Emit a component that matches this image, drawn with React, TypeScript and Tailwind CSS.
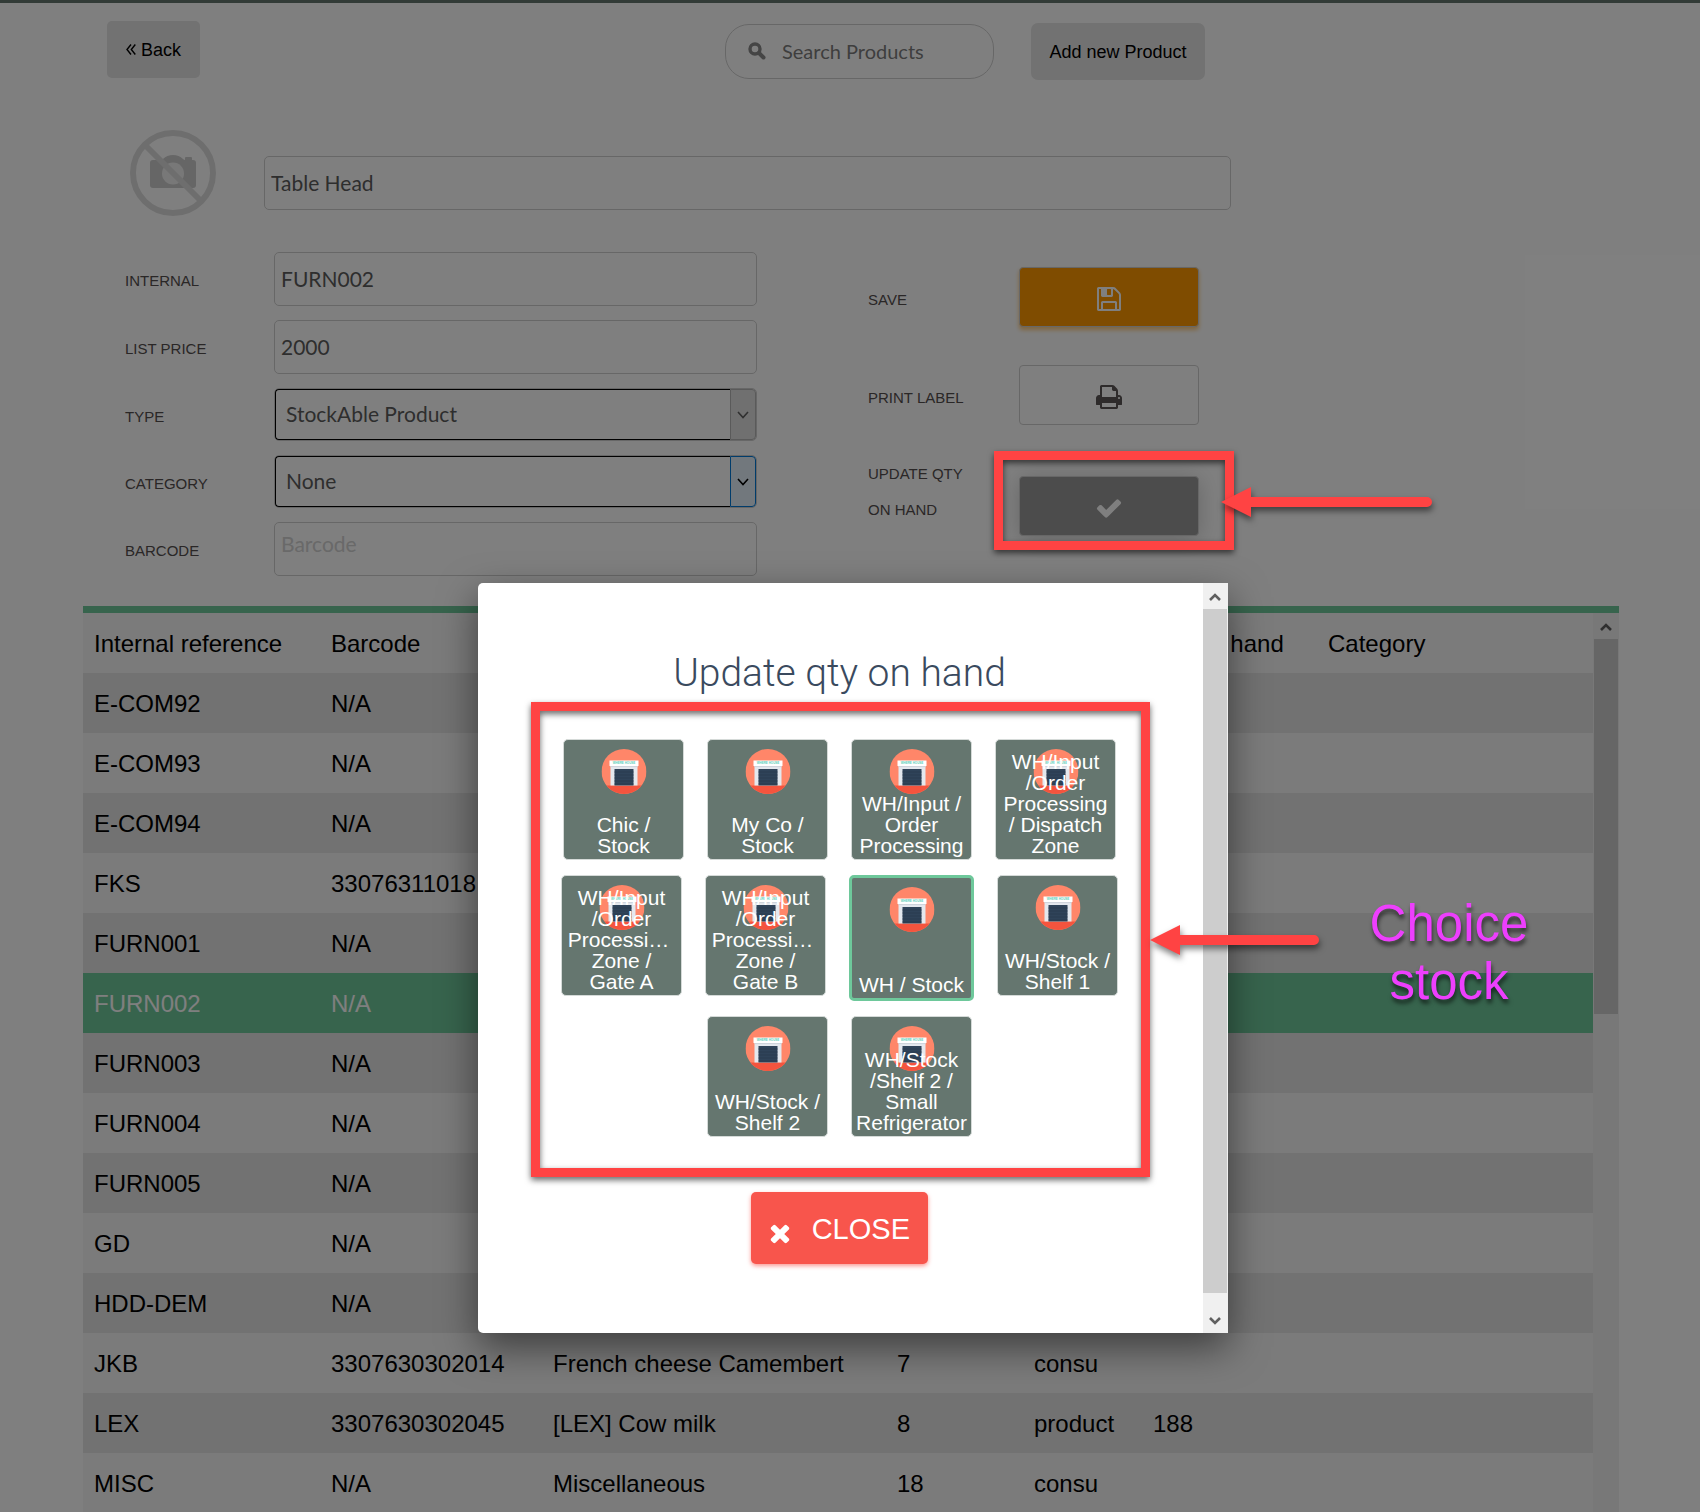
import type { ReactNode } from "react";

const GLYPHS = {
  save: "M512 1536h768v-384h-768v384zm896 0h128v-896q0-14-10-38.5t-20-34.5l-281-281q-10-10-34-20t-39-10v416q0 40-28 68t-68 28h-576q-40 0-68-28t-28-68v-416h-128v1280h128v-416q0-40 28-68t68-28h832q40 0 68 28t28 68v416zm-384-928v-320q0-13-9.5-22.5t-22.5-9.5h-192q-13 0-22.5 9.5t-9.5 22.5v320q0 13 9.5 22.5t22.5 9.5h192q13 0 22.5-9.5t9.5-22.5zm640 32v928q0 40-28 68t-68 28h-1344q-40 0-68-28t-28-68v-1344q0-40 28-68t68-28h928q40 0 88 20t76 48l280 280q28 28 48 76t20 88z",
  print:
    "M448 1536h896v-256h-896v256zm0-640h896v-384h-160q-40 0-68-28t-28-68v-160h-640v640zm1152 64q0-26-19-45t-45-19-45 19-19 45 19 45 45 19 45-19 19-45zm128 0v416q0 13-9.5 22.5t-22.5 9.5h-224v160q0 40-28 68t-68 28h-960q-40 0-68-28t-28-68v-160h-224q-13 0-22.5-9.5t-9.5-22.5v-416q0-79 56.5-135.5t135.5-56.5h64v-544q0-40 28-68t68-28h672q40 0 88 20t76 48l152 152q28 28 48 76t20 88v256h64q79 0 135.5 56.5t56.5 135.5z",
  check:
    "M1671 566q0 40-28 68l-724 724-136 136q-28 28-68 28t-68-28l-136-136-362-362q-28-28-28-68t28-68l136-136q28-28 68-28t68 28l294 295 656-657q28-28 68-28t68 28l136 136q28 28 28 68z",
  times:
    "M1490 1322q0 40-28 68l-136 136q-28 28-68 28t-68-28l-294-294-294 294q-28 28-68 28t-68-28l-136-136q-28-28-28-68t28-68l294-294-294-294q-28-28-28-68t28-68l136-136q28-28 68-28t68 28l294 294 294-294q28-28 68-28t68 28l136 136q28 28 28 68t-28 68l-294 294 294 294q28 28 28 68z",
};

function Glyph({ name, className }: { name: keyof typeof GLYPHS; className: string }) {
  return (
    <svg viewBox="0 0 1792 1792" className={className} fill="currentColor" aria-hidden="true">
      <path d={GLYPHS[name]} />
    </svg>
  );
}

function ScrollArrow({ down }: { down?: boolean }) {
  return (
    <svg viewBox="0 0 12 10" className="h-[10px] w-3" fill="none" stroke="#5f5f5f" strokeWidth="2.6" aria-hidden="true">
      <path d={down ? "M1 2 L6 7 L11 2" : "M1 8 L6 3 L11 8"} />
    </svg>
  );
}

function StoreIcon() {
  return (
    <svg viewBox="0 0 45 45" className="absolute top-[9px] left-1/2 size-[45px] -translate-x-1/2" aria-hidden="true">
      <defs>
        <clipPath id="disc">
          <circle cx="22.5" cy="22.5" r="22.5" />
        </clipPath>
      </defs>
      <g clipPath="url(#disc)">
        <rect width="45" height="45" fill="#ff8669" />
        <rect y="36.5" width="45" height="9" fill="#f4543e" />
        <rect x="9" y="16" width="27" height="20.5" fill="#e4e8ee" />
        <rect x="9" y="16.5" width="27" height="1.6" fill="#cfd4dc" />
        <rect x="13" y="20" width="19" height="16.5" fill="#2f4359" />
        <path d="M13 23h19M13 26h19M13 29h19M13 32h19M13 35h19" stroke="#283a4e" strokeWidth="0.8" />
        <rect x="8" y="11.5" width="29" height="5.5" fill="#fff" />
        <text x="22.5" y="15.4" textAnchor="middle" fontSize="3" fontWeight="700" fontFamily="Liberation Sans, sans-serif" fill="#5fd0bb">
          WHERE HOUSE
        </text>
      </g>
    </svg>
  );
}

const field =
  "h-[54px] w-full rounded-[5px] border border-[#cfcfcf] bg-white px-[6px] pb-[2px] font-[Lato,sans-serif] text-[21px] text-[#5c5c5c] placeholder:text-[#d2d2d2]";

function Label({ htmlFor, children }: { htmlFor: string; children: ReactNode }) {
  return (
    <label htmlFor={htmlFor} className="w-[149px] shrink-0 pt-[5px] text-[15px] text-[#544e4e]">
      {children}
    </label>
  );
}

function SelectBox({ id, value, active }: { id: string; value: string; active?: boolean }) {
  return (
    <div className="flex h-[53px] w-full rounded-[5px] border border-[#cfcfcf]">
      <select
        id={id}
        className="min-w-0 flex-1 appearance-none rounded-l-[4px] border border-r-0 border-black bg-white px-[10px] pb-[2px] font-[Lato,sans-serif] text-[21px] text-[#5c5c5c]"
      >
        <option>{value}</option>
      </select>
      <span
        className={
          active
            ? "flex w-[26px] items-center justify-center rounded-r-[4px] border border-[#0078d7] bg-[#e5f1fb] text-black"
            : "flex w-[26px] items-center justify-center rounded-r-[4px] border border-[#b4b4b4] bg-[#e1e1e1] text-[#606060]"
        }
      >
        <svg viewBox="0 0 12 8" className="h-2 w-3" fill="none" stroke="currentColor" strokeWidth="1.6" aria-hidden="true">
          <path d="M1 1 L6 6.5 L11 1" />
        </svg>
      </span>
    </div>
  );
}

const rows: string[][] = [
  ["E-COM92", "N/A"],
  ["E-COM93", "N/A"],
  ["E-COM94", "N/A"],
  ["FKS", "33076311018"],
  ["FURN001", "N/A"],
  ["FURN002", "N/A"],
  ["FURN003", "N/A"],
  ["FURN004", "N/A"],
  ["FURN005", "N/A"],
  ["GD", "N/A"],
  ["HDD-DEM", "N/A"],
  ["JKB", "3307630302014", "French cheese Camembert", "7", "consu"],
  ["LEX", "3307630302045", "[LEX] Cow milk", "8", "product", "188"],
  ["MISC", "N/A", "Miscellaneous", "18", "consu"],
];

const columns = ["Internal reference", "Barcode", "Name", "Price", "Type", "Qty on hand", "Category"];

function rowClass(i: number) {
  if (rows[i][0] === "FURN002") return "h-[60px] bg-[#6ec89b] text-white";
  return i % 2 === 0 ? "h-[60px] bg-[#e4e4e4]" : "h-[60px] bg-[#f6f6f6]";
}

const locations: string[][][] = [
  [
    ["Chic /", "Stock"],
    ["My Co /", "Stock"],
    ["WH/Input /", "Order", "Processing"],
    ["WH/Input", "/Order", "Processing", "/ Dispatch", "Zone"],
  ],
  [
    ["WH/Input", "/Order", "Processi…\u00a0", "Zone /", "Gate A"],
    ["WH/Input", "/Order", "Processi…\u00a0", "Zone /", "Gate B"],
    ["WH / Stock"],
    ["WH/Stock /", "Shelf 1"],
  ],
  [
    ["WH/Stock /", "Shelf 2"],
    ["WH/Stock", "/Shelf 2 /", "Small", "Refrigerator"],
  ],
];

function LocationTile({ lines }: { lines: string[] }) {
  const selected = lines[0] === "WH / Stock";
  return (
    <button
      type="button"
      className={
        selected
          ? "relative flex h-[126px] w-[125px] flex-col justify-end rounded-[5px] border-[3px] border-[#6ec89b] bg-[#65766f] pb-[3px] text-[21px] leading-[21px] text-white"
          : "relative flex size-[121px] flex-col justify-end rounded-[5px] border border-[#d5dad8] bg-[#65766f] pb-[3px] text-[21px] leading-[21px] text-white"
      }
    >
      <StoreIcon />
      {lines.map((line, i) => (
        <span key={i} className="relative w-full text-center whitespace-nowrap">
          {line}
        </span>
      ))}
    </button>
  );
}

function Arrow({ className, length }: { className: string; length: number }) {
  return (
    <svg
      width={length}
      height="32"
      className={className}
      fill="#ff4343"
      aria-hidden="true"
    >
      <path d={`M0 16 L30 1 V11 H${length - 5} A5 5 0 0 1 ${length - 5} 21 H30 V31 Z`} />
    </svg>
  );
}

export default function App() {
  return (
    <div className="relative flex h-screen flex-col overflow-hidden bg-white font-['Liberation_Sans',Arial,sans-serif] text-black">
      <div className="h-[3px] shrink-0 bg-[#65766f]" />

      <header className="mt-[18px] mr-[495px] ml-[107px] flex shrink-0 items-start justify-between">
        <button
          type="button"
          className="flex h-[57px] w-[93px] items-center justify-center gap-[5px] rounded-[5px] bg-[#e4e4e4] text-lg"
        >
          <svg viewBox="0 0 10 11" className="h-[11px] w-[10px]" fill="none" stroke="currentColor" strokeWidth="1.4" aria-hidden="true">
            <path d="M5 0.5 L1 5.5 L5 10.5 M9.3 0.5 L5.3 5.5 L9.3 10.5" />
          </svg>
          Back
        </button>
        <div className="mt-[2px] flex items-center gap-[37px]">
          <label className="flex h-[55px] w-[269px] items-center gap-4 rounded-[24px] border border-[#cfcfcf] pb-[2px] pl-[22px]">
            <svg viewBox="0 0 18 18" className="size-[18px] shrink-0" fill="none" stroke="#8a8a8a" aria-hidden="true">
              <circle cx="7" cy="7" r="5" strokeWidth="3.4" />
              <path d="M11 11 L15.5 15.5" strokeWidth="4" strokeLinecap="round" />
            </svg>
            <input
              type="text"
              aria-label="Search Products"
              placeholder="Search Products"
              className="w-full min-w-0 bg-transparent font-[Lato,sans-serif] text-xl outline-none placeholder:text-[#7d7d7d]"
            />
          </label>
          <button type="button" className="h-[57px] w-[174px] rounded-[7px] bg-[#e4e4e4] text-lg">
            Add new Product
          </button>
        </div>
      </header>

      <section className="mt-[50px] mr-[469px] ml-[130px] flex shrink-0 items-end">
        <svg viewBox="0 0 86 86" className="mr-[48px] size-[86px] shrink-0" fill="none" aria-hidden="true">
          <path
            d="M23 30 h7 q2 0 3-1 q4-4 10-4 q6 0 10 4 q1 1 2 1 v-2 q0-1 1-1 h5 q1 0 1 1 v2 h1 q3 0 3 3 v22 q0 3-3 3 h-40 q-3 0-3-3 v-22 q0-3 3-3 Z"
            fill="#cccccc"
          />
          <circle cx="43" cy="43.5" r="11" fill="#f1f1f1" />
          <path d="M15 15 L71 71" stroke="#dddddd" strokeWidth="6" />
          <circle cx="43" cy="43" r="40" stroke="#dddddd" strokeWidth="6" />
        </svg>
        <div className="flex-1 pb-[6px]">
          <input aria-label="Product name" className={field} defaultValue="Table Head" />
        </div>
      </section>

      <section className="mt-9 mr-[501px] ml-[125px] flex shrink-0 items-start justify-between">
        <div className="flex w-[632px] flex-col gap-[14px]">
          <div className="flex items-center">
            <Label htmlFor="internal">INTERNAL</Label>
            <input id="internal" className={field} defaultValue="FURN002" />
          </div>
          <div className="flex items-center">
            <Label htmlFor="price">LIST PRICE</Label>
            <input id="price" className={field} defaultValue="2000" />
          </div>
          <div className="flex items-center">
            <Label htmlFor="type">TYPE</Label>
            <SelectBox id="type" value="StockAble Product" />
          </div>
          <div className="flex items-center">
            <Label htmlFor="category">CATEGORY</Label>
            <SelectBox id="category" value="None" active />
          </div>
          <div className="flex items-center">
            <Label htmlFor="barcode">BARCODE</Label>
            <input
              id="barcode"
              className="h-[54px] w-full rounded-[5px] border border-[#cfcfcf] bg-white px-[6px] pb-3 font-[Lato,sans-serif] text-[21px] text-[#5c5c5c] placeholder:text-[#d2d2d2]"
              placeholder="Barcode"
            />
          </div>
        </div>

        <div className="flex w-[331px] flex-col pt-[15px]">
          <div className="flex items-center">
            <label htmlFor="save" className="w-[151px] pt-[7px] text-[15px] text-[#544e4e]">
              SAVE
            </label>
            <button
              id="save"
              type="button"
              className="flex h-[60px] w-[180px] items-center justify-center rounded-[4px] border border-[#cfcfcf] bg-[#ff9900] pt-1 text-white shadow-[0_3px_4px_rgba(255,153,0,0.5)]"
            >
              <Glyph name="save" className="size-7" />
            </button>
          </div>
          <div className="mt-[38px] flex items-center">
            <label htmlFor="print" className="w-[151px] pt-[7px] text-[15px] text-[#544e4e]">
              PRINT LABEL
            </label>
            <button
              id="print"
              type="button"
              className="flex h-[60px] w-[180px] items-center justify-center rounded-[4px] border border-[#cfcfcf] bg-white pt-1 text-[#5c5656]"
            >
              <Glyph name="print" className="size-7" />
            </button>
          </div>
          <div className="mt-[30px] flex items-end">
            <label htmlFor="update" className="h-[81px] w-[151px] pt-px pr-10 text-[15px] leading-9 text-[#544e4e]">
              UPDATE QTY ON HAND
            </label>
            <button
              id="update"
              type="button"
              className="flex h-[60px] w-[180px] items-center justify-center rounded-[4px] border border-[#cfcfcf] bg-[#999999] pt-1 text-white shadow-[0_3px_22px_rgba(0,0,0,0.2)]"
            >
              <Glyph name="check" className="size-7" />
            </button>
          </div>
        </div>
      </section>

      <section className="mt-[30px] mr-[81px] ml-[83px] flex min-h-0 flex-1 overflow-hidden border-t-[7px] border-[#6ec89b]">
        <div className="min-w-0 flex-1">
          <table className="w-full table-fixed border-collapse text-left text-2xl">
            <colgroup>
              <col className="w-[237px]" />
              <col className="w-[222px]" />
              <col className="w-[344px]" />
              <col className="w-[137px]" />
              <col className="w-[119px]" />
              <col className="w-[175px]" />
              <col />
            </colgroup>
            <thead>
              <tr className="h-[60px] bg-[#f6f6f6]">
                {columns.map((c) => (
                  <th key={c} className="pt-[2px] pl-[11px] font-normal whitespace-nowrap">
                    {c}
                  </th>
                ))}
              </tr>
            </thead>
            <tbody>
              {rows.map((r, i) => (
                <tr key={r[0]} className={rowClass(i)}>
                  {columns.map((c, j) => (
                    <td key={c} className="pt-[2px] pl-[11px] whitespace-nowrap">
                      {r[j] ?? ""}
                    </td>
                  ))}
                </tr>
              ))}
            </tbody>
          </table>
        </div>
        <div className="flex w-[26px] shrink-0 flex-col bg-[#f0f0f0] px-px">
          <div className="flex h-[26px] shrink-0 items-center justify-center pt-[2px]">
            <ScrollArrow />
          </div>
          <div className="h-[375px] shrink-0 bg-[#cdcdcd]" />
        </div>
      </section>

      <div className="absolute inset-0 bg-black/50" />

      <div
        role="dialog"
        aria-label="Update qty on hand"
        className="absolute top-[583px] left-[478px] flex h-[750px] w-[750px] overflow-hidden rounded-l-[5px] bg-white shadow-[0_14px_38px_rgba(0,0,0,0.5)]"
      >
        <div className="flex flex-1 flex-col items-center pr-[2px]">
          <h2 className="mt-[66px] font-[Roboto,sans-serif] text-[39px] leading-[48px] font-light text-[#3a4a5e]">
            Update qty on hand
          </h2>
          <div className="mt-[42px] flex flex-col gap-[15px]">
            {locations.map((group, i) => (
              <div key={i} className="flex items-start justify-center gap-[23px]">
                {group.map((lines) => (
                  <LocationTile key={lines.join(" ")} lines={lines} />
                ))}
              </div>
            ))}
          </div>
          <button
            type="button"
            className="mt-[55px] flex h-[72px] w-[177px] items-center justify-between rounded-[5px] bg-[#f8554c] pr-[18px] pl-[15px] text-[29px] text-white shadow-[0_2px_4px_rgba(248,85,76,0.6)]"
          >
            <Glyph name="times" className="mt-[10px] size-7" />
            <span className="mt-1">CLOSE</span>
          </button>
        </div>
        <div className="flex w-[25px] shrink-0 flex-col bg-[#f0f0f0] pr-px">
          <div className="flex h-[26px] items-center justify-center pt-[2px]">
            <ScrollArrow />
          </div>
          <div className="flex-1 bg-[#cdcdcd]" />
          <div className="h-[14px]" />
          <div className="flex h-[26px] items-center justify-center pt-[2px]">
            <ScrollArrow down />
          </div>
        </div>
      </div>

      <div className="absolute top-[451px] left-[994px] h-[99px] w-[240px] border-[9px] border-[#ff4343] drop-shadow-[0_3px_3px_rgba(0,0,0,0.6)]" />
      <Arrow className="absolute top-[486px] left-[1221px] drop-shadow-[1px_4px_3px_rgba(0,0,0,0.5)]" length={211} />
      <div className="absolute top-[702px] left-[531px] h-[475px] w-[619px] border-[9px] border-[#ff4343] drop-shadow-[0_3px_3px_rgba(0,0,0,0.6)]" />
      <Arrow className="absolute top-[924px] left-[1150px] drop-shadow-[1px_4px_3px_rgba(0,0,0,0.5)]" length={169} />
      <p className="absolute top-[895px] left-[1349px] w-[200px] text-center text-[51px] leading-[58px] text-[#ed3ffd] [text-shadow:1px_4px_4px_rgba(0,0,0,0.6)]">
        Choice stock
      </p>
    </div>
  );
}
